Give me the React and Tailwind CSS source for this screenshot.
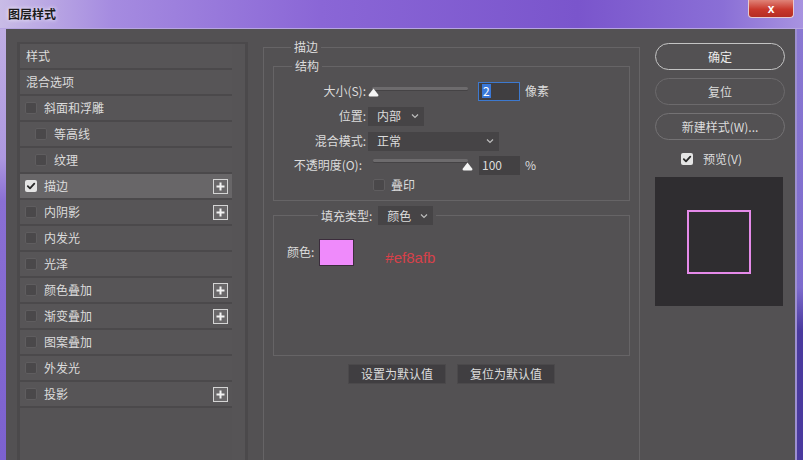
import React from "react";

const FONT = { fontFamily: '"Noto Sans CJK SC", "Noto Sans", sans-serif' };

function Check({ checked, className = "" }) {
  return checked ? (
    <span className={"flex h-[12px] w-[12px] items-center justify-center rounded-[2px] bg-[#e4e4e4] " + className}>
      <svg width="10" height="10" viewBox="0 0 10 10">
        <path d="M1.8 5.2 L4 7.4 L8.3 2.6" fill="none" stroke="#2a2a2a" strokeWidth="1.8" strokeLinecap="round" strokeLinejoin="round" />
      </svg>
    </span>
  ) : (
    <span className={"block h-[12px] w-[12px] rounded-[2px] border border-[#5f5d5f] bg-[#4a484a] " + className} />
  );
}

function PlusBox() {
  return (
    <span className="flex h-[15px] w-[15px] items-center justify-center border border-[#d4d4d4] bg-[#6a686a]">
      <svg width="11" height="11" viewBox="0 0 11 11">
        <path d="M5.5 1.5 V9.5 M1.5 5.5 H9.5" stroke="#f2f2f2" strokeWidth="2" />
      </svg>
    </span>
  );
}

function Chevron() {
  return (
    <svg width="8" height="6" viewBox="0 0 8 6">
      <path d="M1 1.5 L4 4.5 L7 1.5" fill="none" stroke="#bdbdbd" strokeWidth="1.2" />
    </svg>
  );
}

function Thumb() {
  return (
    <svg width="11" height="9" viewBox="0 0 11 9">
      <path d="M5.5 0.5 L10.5 7 Q10.5 8.5 9 8.5 L2 8.5 Q0.5 8.5 0.5 7 Z" fill="#f4f4f4" />
    </svg>
  );
}

const rows = [
  { label: "样式", type: "head" },
  { label: "混合选项", type: "head" },
  { label: "斜面和浮雕", type: "cb" },
  { label: "等高线", type: "cb", indent: true },
  { label: "纹理", type: "cb", indent: true },
  { label: "描边", type: "cb", checked: true, plus: true, active: true },
  { label: "内阴影", type: "cb", plus: true },
  { label: "内发光", type: "cb" },
  { label: "光泽", type: "cb" },
  { label: "颜色叠加", type: "cb", plus: true },
  { label: "渐变叠加", type: "cb", plus: true },
  { label: "图案叠加", type: "cb" },
  { label: "外发光", type: "cb" },
  { label: "投影", type: "cb", plus: true },
];

export default function App() {
  return (
    <div className="flex h-[460px] w-[803px] flex-col overflow-hidden text-[12px] text-[#dcdcdc]" style={FONT}>
      {/* title bar */}
      <div className="flex h-[29px] shrink-0 items-start justify-between border-b border-[#b7a5e2] bg-[linear-gradient(90deg,#c9bce6_0%,#a58be0_14%,#8a66d6_40%,#7a55cc_72%,#8a6fd6_90%,#a893e0_100%)]">
        <span className="ml-[8px] mt-[6px] text-[12px] font-bold leading-[16px] text-[#1b1b1b] [text-shadow:0_0_4px_#ffffff]">图层样式</span>
        <div className="mr-[9px] flex h-[18px] w-[46px] items-center justify-center rounded-b-[4px] border border-t-0 border-[#e6c9cf] bg-[linear-gradient(180deg,#e08378_0%,#c9382c_55%,#b52c22_100%)]">
          <span className="text-[12px] font-bold leading-none text-white" style={{ fontFamily: '"Liberation Sans", sans-serif' }}>x</span>
        </div>
      </div>

      {/* body */}
      <div className="flex min-h-0 flex-1">
        <div className="w-[6px] shrink-0 bg-[linear-gradient(180deg,#bfaee4_0%,#ad98e0_30%,#8a6fd4_40%,#7c61cf_100%)]" />
        <div className="flex min-w-0 flex-1 bg-[#535153] pl-[11px]">
          {/* left list */}
          <div className="mt-[13px] flex h-[600px] w-[231px] shrink-0 bg-[#4b494b] pl-[3px] pt-[2px]">
            <div className="flex w-[212px] flex-col gap-[2px]">
              {rows.map((r) => (
                <div
                  key={r.label}
                  className={
                    "flex h-[24px] shrink-0 items-center pr-[4px] " +
                    (r.active ? "bg-[#686668]" : "bg-[#575557]")
                  }
                >
                  {r.type === "head" ? (
                    <span className="ml-[6px]">{r.label}</span>
                  ) : (
                    <>
                      <Check checked={r.checked} className={r.indent ? "ml-[15px]" : "ml-[5px]"} />
                      <span className="ml-[7px] flex-1">{r.label}</span>
                      {r.plus && <PlusBox />}
                    </>
                  )}
                </div>
              ))}
              <div className="flex-1 bg-[#555355]" />
            </div>
            <div className="w-[13px] bg-[#565456]" />
          </div>

          {/* middle */}
          <div className="ml-[15px] mt-[10px] w-[377px] shrink-0">
            <fieldset className="h-[500px] border border-[#666466] px-[9px] pt-[3px]">
              <legend className="ml-[18px] px-[3px] leading-[16px]">描边</legend>
              <fieldset className="border border-[#666466] pb-[8px]">
                <legend className="ml-[18px] px-[3px] leading-[16px]">结构</legend>
                <div className="flex flex-col pt-[7px]">
                  {/* size */}
                  <div className="flex h-[20px] items-center">
                    <span className="w-[94px] pr-[2px] text-right">大小(S):</span>
                    <div className="relative h-[20px] w-[102px]">
                      <div className="absolute left-[4px] right-[2px] top-[6px] h-[3px] rounded-full bg-[#6d6b6d] shadow-[0_1px_0_#454345]" />
                      <div className="absolute left-0 top-[7px]"><Thumb /></div>
                    </div>
                    <div className="ml-[8px] flex h-[19px] w-[42px] items-center border border-[#3d79cf] bg-[#403e40] pl-[3px]">
                      <span className="bg-[#3a78d8] px-[1px] leading-[14px] text-white">2</span>
                    </div>
                    <span className="ml-[5px]">像素</span>
                  </div>
                  {/* position */}
                  <div className="mt-[5px] flex h-[20px] items-center">
                    <span className="w-[94px] pr-[2px] text-right">位置:</span>
                    <div className="flex h-[19px] w-[56px] items-center justify-between bg-[#464446] pl-[9px] pr-[5px]">
                      <span>内部</span>
                      <Chevron />
                    </div>
                  </div>
                  {/* blend */}
                  <div className="mt-[5px] flex h-[20px] items-center">
                    <span className="w-[94px] pr-[2px] text-right">混合模式:</span>
                    <div className="flex h-[19px] w-[131px] items-center justify-between bg-[#464446] pl-[9px] pr-[5px]">
                      <span>正常</span>
                      <Chevron />
                    </div>
                  </div>
                  {/* opacity */}
                  <div className="mt-[4px] flex h-[20px] items-center">
                    <span className="w-[94px] pr-[6px] text-right">不透明度(O):</span>
                    <div className="relative h-[20px] w-[106px]">
                      <div className="absolute left-[5px] right-[6px] top-[4px] h-[3px] rounded-full bg-[#6d6b6d] shadow-[0_1px_0_#454345]" />
                      <div className="absolute right-[1px] top-[7px]"><Thumb /></div>
                    </div>
                    <div className="ml-[5px] flex h-[19px] w-[41px] items-center bg-[#434143] pl-[3px]">
                      <span>100</span>
                    </div>
                    <span className="ml-[5px]">%</span>
                  </div>
                  {/* overprint */}
                  <div className="mt-[3px] flex h-[14px] items-center pl-[99px]">
                    <Check />
                    <span className="ml-[6px]">叠印</span>
                  </div>
                </div>
              </fieldset>

              <fieldset className="mt-[5px] h-[150px] border border-[#666466]">
                <legend className="ml-[44px] flex items-center px-[3px]">
                  <span>填充类型:</span>
                  <div className="ml-[6px] flex h-[19px] w-[55px] items-center justify-between bg-[#464446] pl-[9px] pr-[5px]">
                    <span>颜色</span>
                    <Chevron />
                  </div>
                </legend>
                <div className="flex items-center pl-[13px] pt-[10px]">
                  <span>颜色:</span>
                  <div className="ml-[5px] h-[27px] w-[35px] border border-[#3b2c3c] bg-[#ef8afb]" />
                  <span className="ml-[31px] mt-[12px] text-[15px] text-[#d8414a]" style={{ fontFamily: '"Liberation Sans", sans-serif' }}>#ef8afb</span>
                </div>
              </fieldset>

              <div className="mt-[8px] flex justify-center gap-[11px]">
                <div className="flex h-[20px] w-[98px] items-center justify-center border border-[#4b494b] bg-[#403e41]">设置为默认值</div>
                <div className="flex h-[20px] w-[98px] items-center justify-center border border-[#4b494b] bg-[#403e41]">复位为默认值</div>
              </div>
            </fieldset>
          </div>

          {/* right */}
          <div className="ml-[15px] mt-[14px] flex w-[130px] shrink-0 flex-col">
            <div className="flex h-[27px] items-center justify-center rounded-full border-[1.5px] border-[#c4c4c4] text-[#ececec]">确定</div>
            <div className="mt-[8px] flex h-[27px] items-center justify-center rounded-full border-[1.5px] border-[#6c6a6c]">复位</div>
            <div className="mt-[8px] flex h-[27px] items-center justify-center rounded-full border-[1.5px] border-[#747274]">新建样式(W)...</div>
            <div className="mt-[10px] flex items-center pl-[26px]">
              <Check checked />
              <span className="ml-[10px]">预览(V)</span>
            </div>
            <div className="mt-[9px] flex h-[129px] w-[128px] items-center justify-center bg-[#2f2d30]">
              <div className="h-[64px] w-[64px] border-2 border-[#e58ae9]" />
            </div>
          </div>
        </div>
        <div className="flex w-[8px] shrink-0">
          <div className="w-[2px] bg-[#9d8fd0]" />
          <div className="flex-1 bg-[linear-gradient(180deg,#8a78d2_0%,#7d6bcd_60%,#4a3a9e_70%,#4a3a9e_100%)]" />
        </div>
      </div>
    </div>
  );
}
